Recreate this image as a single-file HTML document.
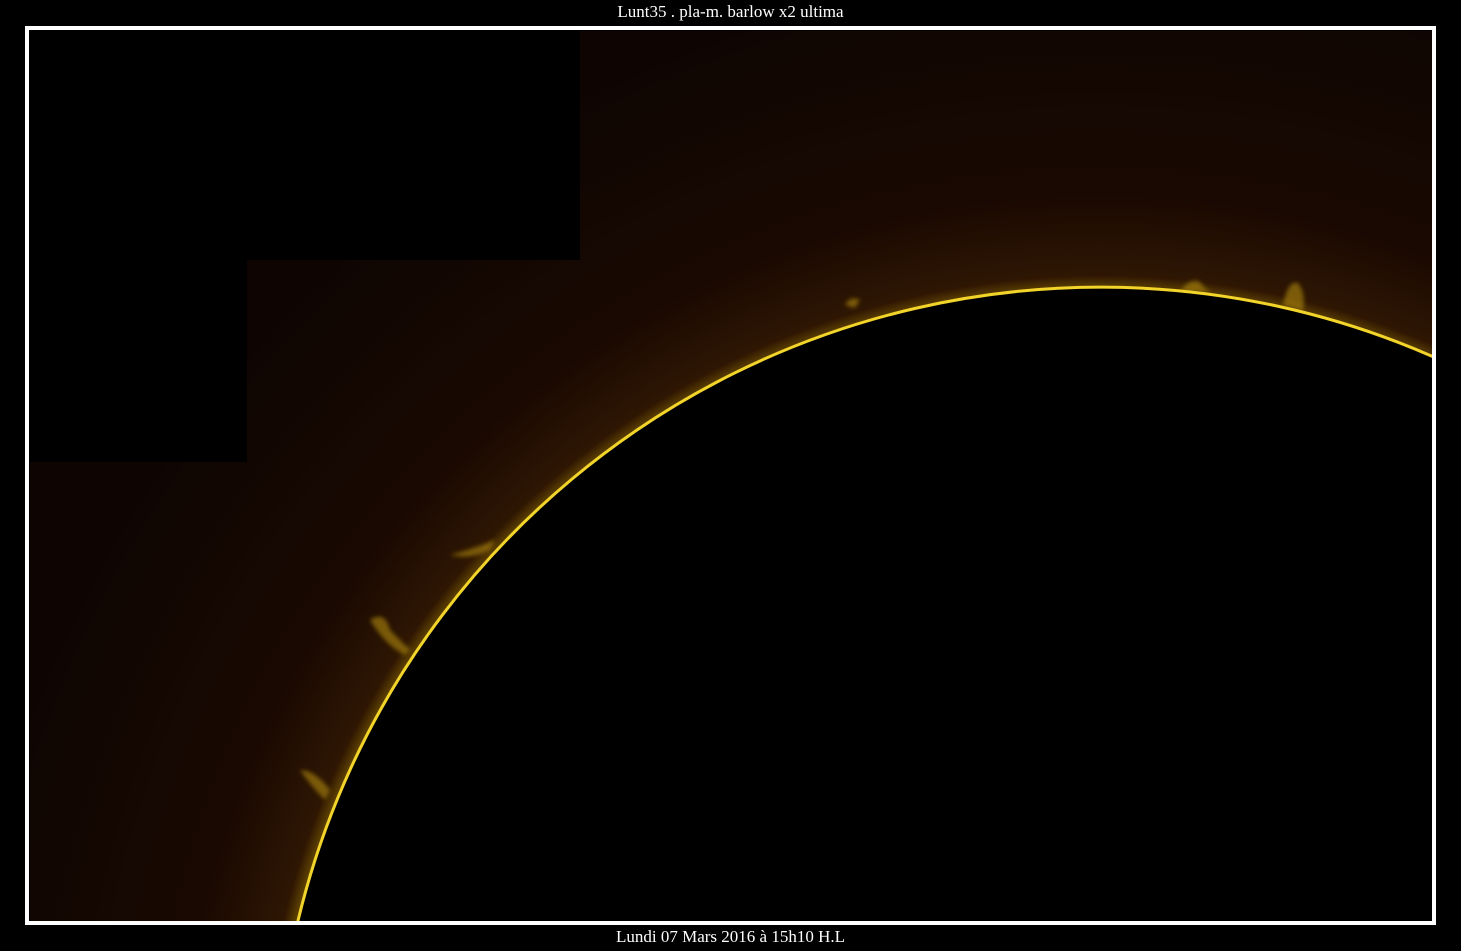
<!DOCTYPE html>
<html><head><meta charset="utf-8"><style>
html,body{margin:0;padding:0;background:#000;width:1461px;height:951px;overflow:hidden}
#w{position:relative;width:1461px;height:951px;overflow:hidden}
.t{position:absolute;left:0;width:1461px;text-align:center;color:#fff;font-family:"Liberation Serif",serif;font-size:17px;line-height:20px;height:20px}
</style></head><body><div id="w">
<div class="t" style="top:2px">Lunt35 . pla-m. barlow x2 ultima</div>
<svg width="1461" height="951" style="position:absolute;left:0;top:0;display:block" viewBox="0 0 1461 951">
<defs>
<radialGradient id="g" cx="1100" cy="1115" r="1150" gradientUnits="userSpaceOnUse">
<stop offset="0.716" stop-color="#6a4c00"/>
<stop offset="0.73" stop-color="#2e1603"/>
<stop offset="0.8" stop-color="#1a0902"/>
<stop offset="1" stop-color="#0e0502"/>
</radialGradient>
<filter id="b"><feGaussianBlur stdDeviation="2"/></filter>
<clipPath id="c"><rect x="30" y="31" width="1402" height="890"/></clipPath>
</defs>
<g clip-path="url(#c)">
<rect x="30" y="31" width="1402" height="890" fill="url(#g)"/>
<rect x="30" y="31" width="550" height="229" fill="#000"/>
<rect x="30" y="260" width="217" height="202" fill="#000"/>
<g fill="#b08a10" opacity="0.6" filter="url(#b)">
<path d="M1180 292 q10 -15 20 -10 q5 8 12 10 z"/>
<path d="M1283 305 q5 -25 15 -22 q8 10 5 28 z"/>
<path d="M370 620 q15 -10 20 10 q10 10 20 20 l-5 5 q-20 -10 -35 -35 z"/>
<path d="M450 555 q20 -5 45 -15 l-5 10 q-20 10 -40 5 z"/>
<path d="M300 770 q15 0 30 20 l-5 10 q-15 -15 -25 -30 z"/>
<path d="M845 305 q5 -10 15 -5 l-5 8 z"/>
</g>
<path d="M297 925 A826 826 0 0 1 1436 358 L1436 925 Z" fill="#000"/>
<path d="M297 925 A826 826 0 0 1 1436 358" fill="none" stroke="#f2d42a" stroke-width="3"/>
</g>
<rect x="27" y="28" width="1407" height="895" fill="none" stroke="#fff" stroke-width="4"/>
</svg>
<div class="t" style="top:927px">Lundi 07 Mars 2016 à 15h10 H.L</div>
</div></body></html>
